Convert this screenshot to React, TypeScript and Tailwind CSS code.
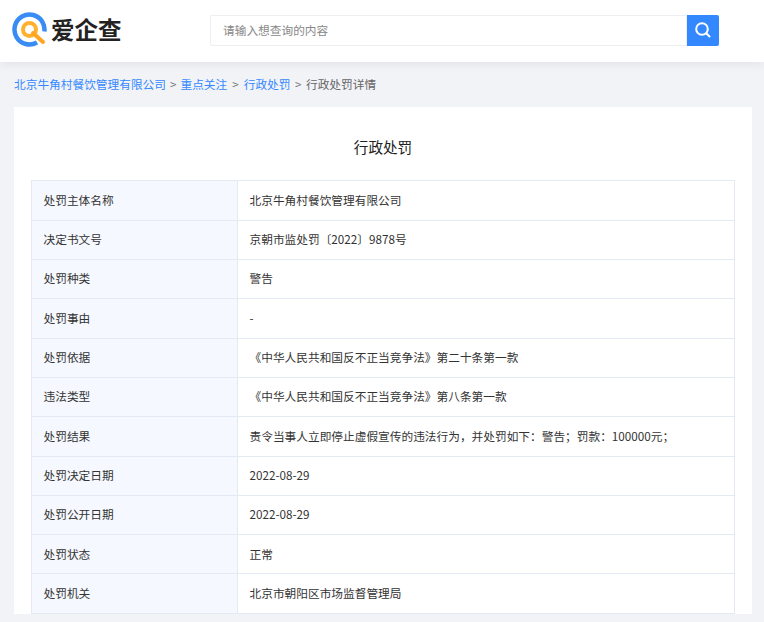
const rows: [string, string][] = [
  ["处罚主体名称", "北京牛角村餐饮管理有限公司"],
  ["决定书文号", "京朝市监处罚〔2022〕9878号"],
  ["处罚种类", "警告"],
  ["处罚事由", "-"],
  ["处罚依据", "《中华人民共和国反不正当竞争法》第二十条第一款"],
  ["违法类型", "《中华人民共和国反不正当竞争法》第八条第一款"],
  ["处罚结果", "责令当事人立即停止虚假宣传的违法行为，并处罚如下：警告；罚款：100000元；"],
  ["处罚决定日期", "2022-08-29"],
  ["处罚公开日期", "2022-08-29"],
  ["处罚状态", "正常"],
  ["处罚机关", "北京市朝阳区市场监督管理局"],
];

export default function App() {
  return (
    <div className="h-[622px] overflow-hidden bg-[#f2f3f7] text-[11.7px] text-[#333] font-['Noto_Sans_CJK_SC',sans-serif]">
      <header className="flex h-[62px] items-center bg-white pb-[2px] pl-3 shadow-[0_2px_10px_rgba(0,0,0,0.07)]">
        <div className="flex w-[198px] items-center">
          <svg width="36" height="36" viewBox="0 0 36 36" fill="none">
            <circle cx="17.5" cy="17.5" r="15" stroke="#3a8cf5" strokeWidth="4.5" strokeDasharray="80 14.2" transform="rotate(60 17.5 17.5)" />
            <circle cx="17.5" cy="17.5" r="8.5" fill="#ffb02e" />
            <circle cx="17.5" cy="17.5" r="4.5" fill="white" />
            <path d="M21 21 L31 30" stroke="#ffa51f" strokeWidth="4" strokeLinecap="round" />
          </svg>
          <span className="ml-[3px] text-[23.5px] leading-none font-bold text-[#222]">爱企查</span>
        </div>
        <div className="flex h-[31px] w-[509px]">
          <div className="flex flex-1 items-center rounded-l-[2px] border border-[#eceef2] pb-[1px] pl-3 text-[#888]">请输入想查询的内容</div>
          <div className="flex w-[32px] items-center justify-center rounded-r-[2px] bg-[#3388ff]">
            <svg width="18" height="18" viewBox="0 0 18 18" fill="none" stroke="white" strokeWidth="2" strokeLinecap="round">
              <circle cx="8" cy="8" r="5.8" />
              <path d="M12.5 12.5 L15.5 15.5" />
            </svg>
          </div>
        </div>
      </header>

      <nav className="flex h-[45px] items-center pb-[2px] pl-[14px] text-[#666]">
        <span className="text-[#3388ff]">北京牛角村餐饮管理有限公司</span>
        <span className="mx-[4px] text-[#777]">&gt;</span>
        <span className="text-[#3388ff]">重点关注</span>
        <span className="mx-[5px] text-[#777]">&gt;</span>
        <span className="text-[#3388ff]">行政处罚</span>
        <span className="mx-[4.5px] text-[#777]">&gt;</span>
        <span>行政处罚详情</span>
      </nav>

      <main className="mr-[12px] ml-[14px] bg-white px-[17px]">
        <h1 className="flex h-[73px] items-center justify-center pt-[7px] text-[14.6px] font-normal text-[#222]">行政处罚</h1>
        <div className="border-t border-r border-l border-[#e4eaf4]">
          {rows.map(([label, value]) => (
            <div key={label} className="flex h-[39.3px] border-b border-[#e4eaf4] first:h-[39.8px]">
              <div className="flex w-[206px] items-center border-r border-[#e4eaf4] bg-[#f5f8fe] pb-[2px] pl-[11.5px]">{label}</div>
              <div className="flex flex-1 items-center pb-[2px] pl-[11.5px]">{value}</div>
            </div>
          ))}
        </div>
      </main>
    </div>
  );
}
